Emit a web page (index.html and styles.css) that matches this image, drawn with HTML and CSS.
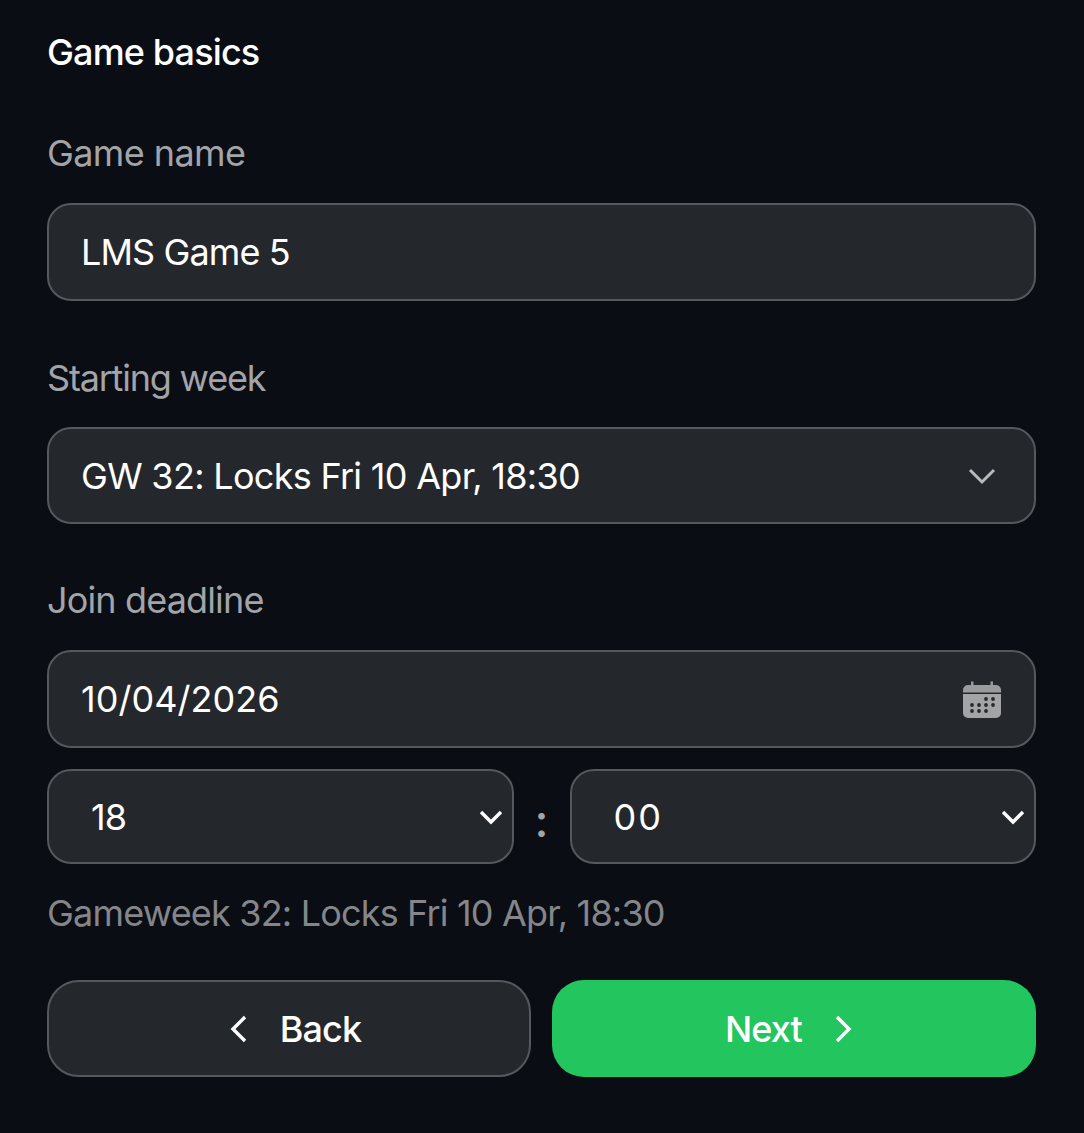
FILE: index.html
```html
<!DOCTYPE html>
<html lang="en">
<head>
<meta charset="utf-8">
<title>Game basics</title>
<link rel="stylesheet" href="styles.css">
</head>
<body>
<main class="form">
  <h2 class="title">Game basics</h2>
  <div class="label">Game name</div>
  <div class="field">LMS Game 5</div>
  <div class="label label-week">Starting week</div>
  <div class="field field-select">
    <span>GW 32: Locks Fri 10 Apr, 18:30</span>
    <svg class="chev-big" viewBox="0 0 28 18" fill="none"><path d="M2 3 14 15 26 3" stroke="#b9babc" stroke-width="3"/></svg>
  </div>
  <div class="label label-join">Join deadline</div>
  <div class="field field-select field-date">
    <span class="digits">10/04/2026</span>
    <svg class="cal" viewBox="0 0 38 38"><path d="M8 1.5h2.5V5h17V1.5H30V5h3a5 5 0 0 1 5 5v2.5H0V10a5 5 0 0 1 5-5h3z" fill="#9a9b9d"/><path d="M0 14h38v19a5 5 0 0 1-5 5H5a5 5 0 0 1-5-5z" fill="#a3a4a6"/><g fill="#26282c"><circle cx="23" cy="19" r="1.9"/><circle cx="30" cy="19" r="1.9"/><circle cx="9" cy="25" r="1.9"/><circle cx="16" cy="25" r="1.9"/><circle cx="23" cy="25" r="1.9"/><circle cx="30" cy="25" r="1.9"/><circle cx="9" cy="31" r="1.9"/><circle cx="16" cy="31" r="1.9"/><circle cx="23" cy="31" r="1.9"/></g></svg>
  </div>
  <div class="time">
    <div class="field field-time">
      <span>18</span>
      <svg class="chev" viewBox="0 0 24 16" fill="none"><path d="M2 3 12 13 22 3" stroke="#fff" stroke-width="3.4"/></svg>
    </div>
    <span class="colon">:</span>
    <div class="field field-time">
      <span class="zeros">00</span>
      <svg class="chev" viewBox="0 0 24 16" fill="none"><path d="M2 3 12 13 22 3" stroke="#fff" stroke-width="3.4"/></svg>
    </div>
  </div>
  <p class="hint">Gameweek 32: Locks Fri 10 Apr, 18:30</p>
  <div class="actions">
    <button class="btn btn-back" type="button">
      <svg class="arrow" viewBox="0 0 18 30" fill="none"><path d="M15 3 3 15l12 12" stroke="#fff" stroke-width="3.4"/></svg>
      Back
    </button>
    <button class="btn btn-next" type="button">
      Next
      <svg class="arrow" viewBox="0 0 18 30" fill="none"><path d="M3 3l12 12L3 27" stroke="#fff" stroke-width="3.4"/></svg>
    </button>
  </div>
</main>
</body>
</html>
```

FILE: styles.css
```css
* { box-sizing: border-box; }
html, body { margin: 0; height: 100%; }
body {
  background: #0a0d14;
  color: #fff;
  font-family: Inter, "Liberation Sans", sans-serif;
  overflow: hidden;
}
.form { padding: 30px 48px 0 47px; display: flex; flex-direction: column; }
.title { margin: 0 0 57px; font-size: 36px; line-height: 44px; font-weight: 500; letter-spacing: -0.85px; }
.label { font-size: 36px; line-height: 44px; color: #a2a4a8; margin: 0 0 28px; letter-spacing: -0.6px; }
.label-week { margin-top: 55px; margin-bottom: 27px; letter-spacing: -1.2px; }
.label-join { margin-top: 54px; margin-bottom: 28px; letter-spacing: -0.85px; }
.field {
  height: 98px;
  background: #24272c;
  border: 2px solid #55585d;
  border-radius: 24px;
  padding: 0 32px;
  font-size: 36px;
  letter-spacing: -0.9px;
  display: flex;
  align-items: center;
}
.field-select { justify-content: space-between; height: 97px; letter-spacing: -0.7px; }
.field-date { height: 98px; }
.digits { letter-spacing: 0.05px; }
.zeros { letter-spacing: 2px; }
.chev-big { width: 28px; height: 18px; margin-right: 6px; }
.cal { width: 38px; height: 38px; margin-right: 1px; }
.time { display: flex; align-items: center; margin-top: 21px; }
.field-time { flex: 1; height: 95px; padding: 0 9px 0 42px; justify-content: space-between; }
.colon { width: 56px; text-align: center; color: #a2a4a8; font-size: 46px; line-height: 46px; font-weight: 500; padding-top: 6px; }
.chev { width: 24px; height: 16px; }
.hint { margin: 27px 0 45px; font-size: 36px; line-height: 44px; color: #84868a; letter-spacing: -0.82px; }
.actions { display: grid; grid-template-columns: 1fr 1fr; gap: 21px; }
.btn {
  height: 97px;
  border-radius: 32px;
  font: 450 36px Inter, "Liberation Sans", sans-serif;
  letter-spacing: -0.9px;
  color: #fff;
  display: flex;
  align-items: center;
  justify-content: center;
  gap: 32px;
}
.btn-back { background: #24272c; border: 2px solid #55585d; padding-left: 19px; }
.btn-next { background: #22c55e; border: 0; padding-right: 17px; }
.arrow { width: 18px; height: 30px; }
```
